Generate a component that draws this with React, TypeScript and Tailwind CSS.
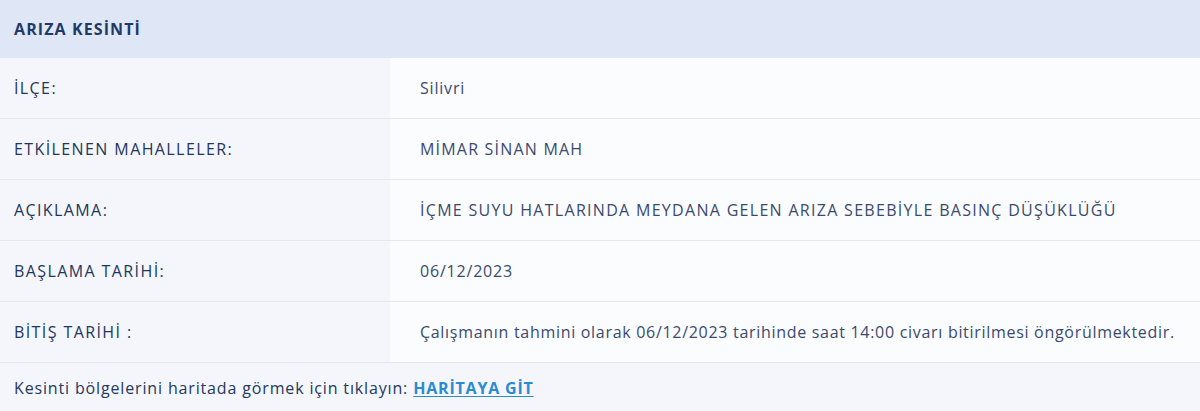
import React from 'react';

const ROWS: { label: string; value: string; track: string }[] = [
  { label: 'İLÇE:', value: 'Silivri', track: 'tracking-[0.8px]' },
  { label: 'ETKİLENEN MAHALLELER:', value: 'MİMAR SİNAN MAH', track: 'tracking-[1.2px]' },
  {
    label: 'AÇIKLAMA:',
    value: 'İÇME SUYU HATLARINDA MEYDANA GELEN ARIZA SEBEBİYLE BASINÇ DÜŞÜKLÜĞÜ',
    track: 'tracking-[1.3px]',
  },
  { label: 'BAŞLAMA TARİHİ:', value: '06/12/2023', track: 'tracking-[0.8px]' },
  {
    label: 'BİTİŞ TARİHİ :',
    value: 'Çalışmanın tahmini olarak 06/12/2023 tarihinde saat 14:00 civarı bitirilmesi öngörülmektedir.',
    track: 'tracking-[0.7px]',
  },
];

export default function App() {
  return (
    <div className="w-[1200px] h-[411px] bg-[#f4f6fb] font-['Open_Sans','Noto_Sans',sans-serif] text-[16px]">
      {/* Header */}
      <div className="h-[58px] bg-[#dfe7f6] flex items-center px-[14px]">
        <h2 className="font-bold text-[#1f3a66] tracking-[1.1px]">ARIZA KESİNTİ</h2>
      </div>

      {/* Rows */}
      {ROWS.map((row) => (
        <div key={row.label} className="flex h-[61px] border-b border-[#e3e7ee]">
          <div className="w-[390px] flex items-center px-[14px] bg-[#f4f6fb] text-[#22365c] font-medium tracking-[1.4px]">
            {row.label}
          </div>
          <div className={`flex-1 flex items-center pl-[30px] bg-[#fbfcfe] text-[#3a4a6e] ${row.track}`}>
            {row.value}
          </div>
        </div>
      ))}

      {/* Footer */}
      <div className="h-[50px] flex items-center px-[14px] text-[#24385e] tracking-[0.85px]">
        <span>Kesinti bölgelerini haritada görmek için tıklayın:&nbsp;</span>
        <a href="#" className="font-bold text-[#2a8bd1] underline underline-offset-2 tracking-[0.8px]">
          HARİTAYA GİT
        </a>
      </div>
    </div>
  );
}
